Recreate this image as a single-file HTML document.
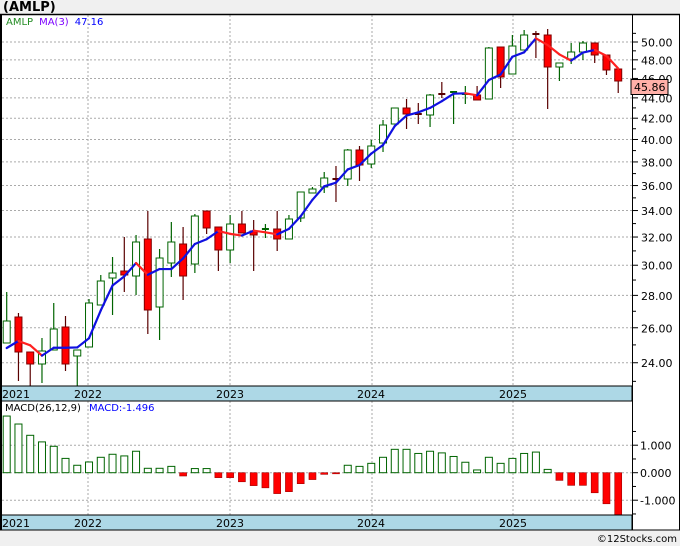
<!DOCTYPE html>
<html><head><meta charset="utf-8"><style>
body{margin:0;background:#f0f0f0;width:680px;height:546px;overflow:hidden;font-family:"Liberation Sans",sans-serif}
svg{position:absolute;left:0;top:0}
</style></head><body>
<svg id="s" width="680" height="546" xmlns="http://www.w3.org/2000/svg" font-family="'DejaVu Sans','Liberation Sans',sans-serif">
<rect x="0" y="0" width="680" height="546" fill="#f0f0f0"/>
<text x="3" y="11" font-size="13" font-weight="bold" fill="#000">(AMLP)</text>
<rect x="1" y="14" width="678" height="516" fill="#fff"/>
<g id="g"></g>
</svg>
<script>
const g=document.getElementById('g');let h='';
const X=i=>6.7+11.76*i;
// price axis
const py=p=>42+437*(Math.log(50)-Math.log(p));
// horizontal grid
for(let p=24;p<=50;p+=2){const y=py(p);h+=`<line x1="2" x2="632" y1="${y}" y2="${y}" stroke="#aaa" stroke-dasharray="2,2"/>`;
h+=`<line x1="632" x2="638" y1="${y}" y2="${y}" stroke="#000"/><text x="641" y="${y+4.5}" font-size="11" fill="#000">${p.toFixed(2)}</text>`;}
for(let p=23;p<=51;p+=2){const y=py(p);if(y>16&&y<385)h+=`<line x1="632" x2="636" y1="${y}" y2="${y}" stroke="#000"/>`;}
// MACD grid
const my=v=>472.7-27.5*v;
[1,0,-1].forEach(v=>{const y=my(v);h+=`<line x1="2" x2="632" y1="${y}" y2="${y}" stroke="#aaa" stroke-dasharray="2,2"/><line x1="632" x2="638" y1="${y}" y2="${y}" stroke="#000"/><text x="640" y="${y+4.5}" font-size="11" fill="#000">${v==1?'1.000':v==0?'0.000':'-1.000'}</text>`});
[1.5,0.5,-0.5,-1.5].forEach(v=>{h+=`<line x1="632" x2="636" y1="${my(v)}" y2="${my(v)}" stroke="#000"/>`});
// vertical grid
[88,230,372,513].forEach(x=>{h+=`<line x1="${x}" x2="${x}" y1="15" y2="386" stroke="#aaa" stroke-dasharray="2,2"/><line x1="${x}" x2="${x}" y1="401" y2="515" stroke="#aaa" stroke-dasharray="2,2"/>`});
// candles [color,bodyTop,bodyBot,high,low]
const C=[['g',321,343,292,343],['r',317,352,313,381],['r',352,364,352,387],['g',351,364,338,383],['g',329,350,303,350],['r',327,364,316,371],['g',350,356,350,387],['g',303,347,299,347],['g',281,305,275,305],['g',273,278,257,315],
['r',271,275,237,292],['g',242,276,235,295],['r',239,310,211,334],['g',258,307,249,340],['g',242,263,222,277],['r',244,276,227,300],['g',216,264,214,273],['r',211,228,211,234],['r',227,250,227,271],['g',224,250,215,263],
['r',224,233,211,233],['r',231,235,220,271],['g',229,229,224,238],['r',229,239,211,251],['g',219,239,215,239],['g',192,218,192,222],['g',189,193,187,193],['g',178,187,172,193],['r',179,181,166,202],['g',150,179,149,186],
['r',150,165,146,181],['g',146,164,140,168],['g',125,143,120,152],['g',108,124,108,124],['r',108,114,99,129],['r',114,115,103,124],['g',95,115,94,127],['r',94,94,82,98],['g',92,92,92,124],['g',94,94,86,104],
['r',95,100,86,100],['g',48,99,47,99],['r',47,77,47,88],['g',46,74,35,74],['g',35,50,30,50],['r',34,34,31,58],['r',35,67,29,109],['g',63,67,63,81],['g',52,59,43,64],['g',43,52,41,60],
['r',43,55,43,63],['r',55,70,55,75],['r',69,81,69,93]];
C.forEach((c,i)=>{const x=X(i);const gr=c[0]=='g';const wc=gr?'#006400':'#5a0000';
h+=`<line x1="${x}" x2="${x}" y1="${c[3]}" y2="${c[4]}" stroke="${wc}" stroke-width="1.2"/>`;
const bh=Math.max(c[2]-c[1],1.5);
if(bh<=2){h+=`<rect x="${x-3.5}" y="${c[1]-1}" width="7" height="2" fill="${wc}"/>`}
else h+=`<rect x="${x-3.5}" y="${c[1]}" width="7" height="${bh}" fill="${gr?'#fff':'#f00'}" stroke="${gr?'#006400':'#800000'}" stroke-width="1"/>`;});
// MA3
const yp=y=>Math.exp(Math.log(50)-(y-42)/437);
const cl=C.map(c=>yp(c[0]=='g'?c[1]:c[2]));
const ma=[348,341];for(let i=2;i<C.length;i++)ma.push(py((cl[i]+cl[i-1]+cl[i-2])/3));
for(let i=1;i<ma.length;i++){h+=`<line x1="${X(i-1)}" y1="${ma[i-1]}" x2="${X(i)}" y2="${ma[i]}" stroke="${ma[i]>ma[i-1]+0.3?'#ff2020':'#1010e0'}" stroke-width="2.2" stroke-linecap="round"/>`}
// MACD
const M=[2.06,1.77,1.36,1.12,0.96,0.52,0.27,0.39,0.56,0.67,0.61,0.78,0.16,0.16,0.23,-0.12,0.15,0.15,-0.18,-0.18,-0.33,-0.47,-0.55,-0.76,-0.69,-0.40,-0.25,-0.06,-0.04,0.27,0.23,0.34,0.56,0.85,0.85,0.70,0.78,0.72,0.59,0.38,0.10,0.56,0.34,0.52,0.70,0.75,0.12,-0.28,-0.46,-0.46,-0.73,-1.13,-1.54];
M.forEach((v,i)=>{const x=X(i)-3.5;const y0=my(0),y1=my(v);
if(v>=0)h+=`<rect x="${x}" y="${y1}" width="7" height="${y0-y1}" fill="#fff" stroke="#006400"/>`;
else h+=`<rect x="${x}" y="${y0}" width="7" height="${y1-y0}" fill="#f00" stroke="#a00000" stroke-width="0.6"/>`;});
// date bars
[[386,401],[515,530]].forEach(([a,b])=>{h+=`<rect x="1" y="${a}" width="631" height="${b-a}" fill="#add8e6" stroke="#000"/>`;
[['2021',2],['2022',74],['2023',216],['2024',357],['2025',499]].forEach(([t,x])=>{h+=`<text x="${x}" y="${a+12}" font-size="11" fill="#000">${t}</text>`});});
// frames
h+=`<line x1="0" x2="680" y1="14.5" y2="14.5" stroke="#000" stroke-width="1.5"/>`;
h+=`<line x1="1" x2="1" y1="14" y2="530" stroke="#000" stroke-width="2"/>`;
h+=`<line x1="632.5" x2="632.5" y1="14" y2="530" stroke="#000"/>`;
h+=`<line x1="679.5" x2="679.5" y1="14" y2="530" stroke="#000"/>`;
h+=`<line x1="0" x2="680" y1="530" y2="530" stroke="#000"/>`;
// labels
h+=`<text x="6" y="25" font-size="10"><tspan fill="#228b22">AMLP</tspan><tspan fill="#7b00ff" dx="6">MA(3)</tspan><tspan fill="#0000ff" dx="6">47.16</tspan></text>`;
h+=`<text x="5" y="411" font-size="10"><tspan fill="#000">MACD(26,12,9)</tspan><tspan fill="#0000ff" dx="8">MACD:-1.496</tspan></text>`;
h+=`<rect x="631" y="79.5" width="37" height="15" fill="#ffb0a8" stroke="#000"/><text x="634" y="91" font-size="11" fill="#000">45.86</text>`;
h+=`<text x="677" y="542" font-size="10" text-anchor="end" fill="#000">©12Stocks.com</text>`;
g.innerHTML=h;
</script>
</body></html>
